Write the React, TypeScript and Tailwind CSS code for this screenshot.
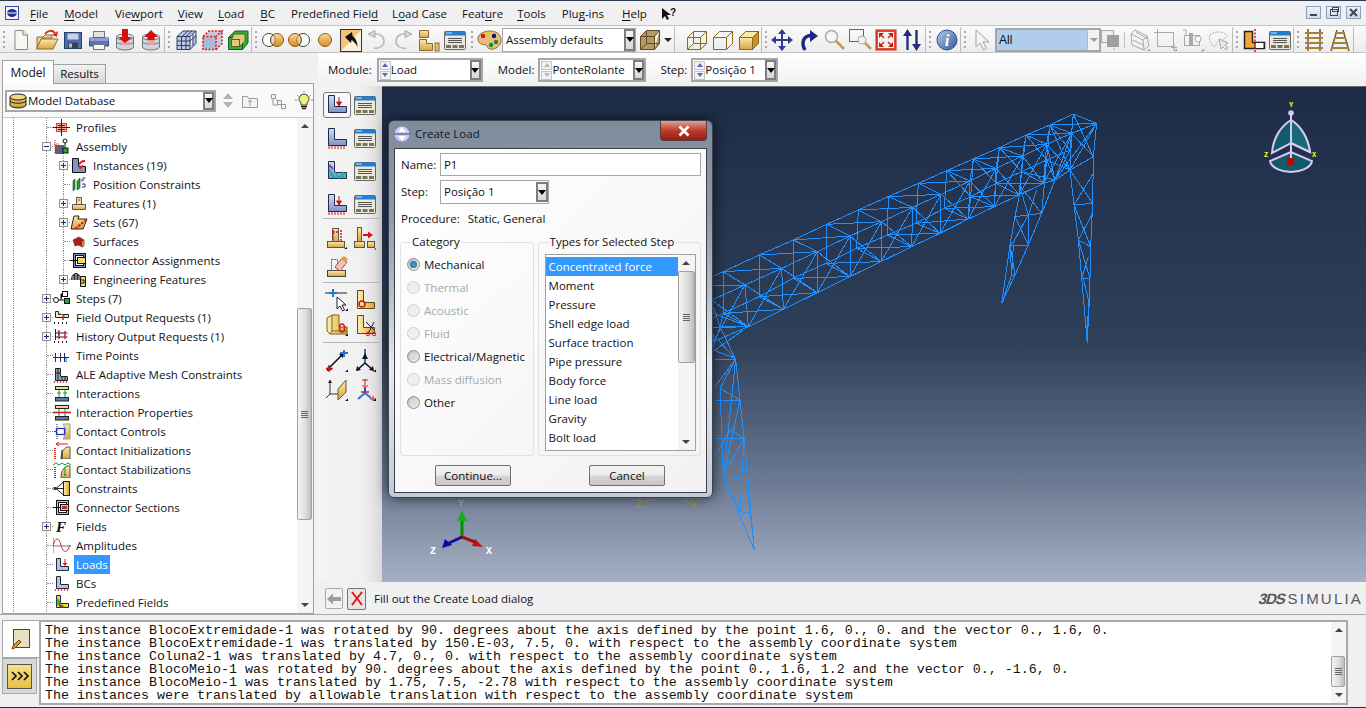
import type { FC, ReactNode } from 'react';

const Ic: FC<{ w?: number; h?: number; children: ReactNode }> = ({ w = 24, h = 24, children }) => (
  <svg width={w} height={h} viewBox={`0 0 ${w} ${h}`} className="shrink-0">
    {children}
  </svg>
);

const Defs = () => (
  <svg width="0" height="0" className="absolute">
    <defs>
      <linearGradient id="gold" x1="0" y1="0" x2="0" y2="1">
        <stop offset="0" stopColor="#fbe9a8" />
        <stop offset="1" stopColor="#d9a544" />
      </linearGradient>
      <linearGradient id="goldH" x1="0" y1="0" x2="1" y2="0">
        <stop offset="0" stopColor="#fff0b0" />
        <stop offset="1" stopColor="#e0a030" />
      </linearGradient>
      <linearGradient id="steel" x1="0" y1="0" x2="0" y2="1">
        <stop offset="0" stopColor="#d5dcf0" />
        <stop offset="1" stopColor="#7f93c4" />
      </linearGradient>
      <linearGradient id="ball" x1="0" y1="0" x2="1" y2="1">
        <stop offset="0" stopColor="#b9cbe6" />
        <stop offset="1" stopColor="#2c5a9c" />
      </linearGradient>
      <linearGradient id="orb" x1="0" y1="0" x2="0" y2="1">
        <stop offset="0" stopColor="#fbd79a" />
        <stop offset="1" stopColor="#d98a20" />
      </linearGradient>
    </defs>
  </svg>
);

/* toolbar drawings */
const NewDoc = () => (
  <Ic>
    <path d="M6 2.5h8l4.5 4.5v14.5H6z" fill="#f7f7f0" stroke="#8a8a8a" />
    <path d="M14 2.5V7h4.5" fill="#e5e5dc" stroke="#8a8a8a" />
  </Ic>
);
const OpenDoc = () => (
  <Ic>
    <path d="M2 9h6l2-2h7v3H7L2 20z" fill="#f2d68a" stroke="#8a6d2a" />
    <path d="M6 11h17l-5 10H1.5z" fill="url(#gold)" stroke="#8a6d2a" />
    <path d="M10 6c3-4 7-4 10-1" fill="none" stroke="#d4301c" strokeWidth="2" />
    <path d="M23 3l-1 6-5-2z" fill="#d4301c" />
  </Ic>
);
const Save = () => (
  <Ic>
    <rect x="3.5" y="4.5" width="17" height="16" fill="#4a6fae" stroke="#25406f" />
    <rect x="6.5" y="5.5" width="11" height="6" fill="#c8d2e4" />
    <rect x="7" y="14.5" width="10" height="6" fill="#3a3f4c" />
    <rect x="8" y="15.5" width="3" height="4" fill="#b8c0d0" />
  </Ic>
);
const Printer = () => (
  <Ic>
    <rect x="6.5" y="3.5" width="11" height="6" fill="#e4e4e8" stroke="#777" />
    <path d="M2.5 10h19v8h-19z" fill="#5f73b4" stroke="#3c4a80" />
    <rect x="2.5" y="10" width="19" height="3" fill="#8fa2d6" />
    <rect x="6.5" y="16.5" width="11" height="5" fill="#f5f5f5" stroke="#777" />
    <rect x="16" y="11" width="3" height="1" fill="#5ad05a" />
  </Ic>
);
const DbArrow: FC<{ up?: boolean }> = ({ up }) => (
  <Ic>
    <ellipse cx="12" cy="19" rx="8.5" ry="3" fill="#ccd4de" stroke="#6a7480" />
    <rect x="3.5" y="9" width="17" height="10" fill="#cfd6e0" />
    <path d="M3.5 9v10M20.5 9v10M3.5 14c2 3 15 3 17 0" fill="none" stroke="#6a7480" />
    <ellipse cx="12" cy="9" rx="8.5" ry="3" fill="#e4e8ee" stroke="#6a7480" />
    <rect x="8" y="9" width="8" height="8" fill="#e8a0a0" opacity="0.8" />
    {up ? (
      <path d="M8.5 3v8h7V8H19l-7-7-7 7h3.5z" fill="#d40f0f" transform="translate(0 1)" />
    ) : (
      <path d="M9 1h6v8h4l-7 6-7-6h4z" fill="#d40f0f" />
    )}
  </Ic>
);
const CubeGrid = () => (
  <Ic>
    <path d="M3 8.5h13v13H3zM3 8.5L9 3h13L16 8.5M16 21.5l6-6V3" fill="#bcc9e2" stroke="#2d3d66" />
    <path d="M7.5 8.5v13M12 8.5v13M3 13h13M3 17.5h13M8 3.5h0M14 3l-6 5.5M18 3l-6 5.5M19 5.8v12M16 13l6-5.5" fill="none" stroke="#2d3d66" />
  </Ic>
);
const CubeRed = () => (
  <Ic>
    <path d="M3 8.5h13v13H3z" fill="#a9bbdc" />
    <path d="M3 8.5L9 3h13v12.5l-6 6V8.5z" fill="#c0cde4" />
    <path d="M3 8.5h13v13H3zM3 8.5L9 3h13L16 8.5M16 21.5l6-6V3" fill="none" stroke="#e01010" strokeWidth="1.5" strokeDasharray="2 1.5" />
  </Ic>
);
const CubeGreen = () => (
  <Ic>
    <path d="M2.5 9.5h14v12h-14zM2.5 9.5L9 3h13v12l-5.5 6.5V9.5z" fill="#2fb12f" stroke="#1d5a1d" />
    <path d="M5.5 11.5h8v7h-8zM8 6h11v7l-5.5 5.5v-7h-8z" fill="#d9cc80" stroke="#60601a" />
  </Ic>
);
const Venn: FC<{ a?: boolean }> = ({ a }) => (
  <Ic w={26}>
    <circle cx={a ? 9 : 17} cy="12" r="6.5" fill="#fff" stroke="#444" />
    <circle cx={a ? 17 : 9} cy="12" r="6.5" fill="url(#orb)" stroke="#8a5a10" />
    <path d="M13 7a6.5 6.5 0 0 1 0 10 6.5 6.5 0 0 1 0-10z" fill={a ? '#fff' : '#f6e7c5'} stroke="#444" opacity="0.5" />
  </Ic>
);
const Solid = () => (
  <Ic w={26}>
    <circle cx="13" cy="12" r="6.5" fill="url(#orb)" stroke="#8a5a10" />
  </Ic>
);
const PickFace = () => (
  <Ic>
    <rect x="1.5" y="1.5" width="21" height="22" fill="#f4c27a" stroke="#444" />
    <path d="M22 2L2 23h20z" fill="#f9efdc" />
    <path d="M1.5 1.5h21v22h-21z" fill="none" stroke="#333" />
    <path d="M6 9l7-5 .5 4c3 2 5 6 5 11-2-4-4-6-6-7l-.5 3z" fill="#111" />
  </Ic>
);
const Undo: FC<{ flip?: boolean }> = ({ flip }) => (
  <Ic>
    <g transform={flip ? 'translate(24 0) scale(-1 1)' : undefined}>
      <path d="M8 6c6-1 11 2 11 7s-5 8-10 7" fill="none" stroke="#b8b8b8" strokeWidth="1.5" />
      <path d="M3 6l7-3.5v7z" fill="#d4d4d4" stroke="#aaa" />
    </g>
  </Ic>
);
const Pieces = () => (
  <Ic>
    <path d="M2.5 2.5h9v7h-9z" fill="url(#gold)" stroke="#8a6d2a" />
    <path d="M2.5 11.5h7v4h6v7h-13z" fill="url(#gold)" stroke="#8a6d2a" />
    <rect x="18" y="15" width="4" height="8" fill="#e6bf70" stroke="#8a6d2a" />
  </Ic>
);
const Manager = () => (
  <Ic>
    <rect x="1.5" y="3.5" width="21" height="18" rx="1" fill="#ece8da" stroke="#666" />
    <rect x="2" y="3.5" width="20" height="4" fill="#1f7fd0" />
    <rect x="3" y="4.5" width="6" height="1" fill="#cfe6fa" />
    <path d="M5 10.5h14M5 12.5h14M5 14.5h14" stroke="#555" />
    <rect x="3" y="17" width="5" height="3" fill="#7b7556" />
    <rect x="9.5" y="17" width="5" height="3" fill="#7b7556" />
    <rect x="16" y="17" width="5" height="3" fill="#7b7556" />
  </Ic>
);
const Palette = () => (
  <Ic w={26}>
    <path d="M2 12C1 6 8 3 14 3s11 3 11 9-6 10-11 9c-3-.5-2-3-4-4s-7 0-8-5z" fill="#e8bd82" stroke="#8a6d3a" />
    <circle cx="7" cy="8" r="2.2" fill="#d41818" />
    <circle cx="12.5" cy="6" r="2.2" fill="#e8d018" />
    <circle cx="18" cy="8" r="2.2" fill="#10107a" />
    <circle cx="20" cy="14" r="2.2" fill="#1a8a2a" />
    <circle cx="15" cy="17" r="2.2" fill="#1a8a2a" />
  </Ic>
);
const CubeWire = () => (
  <Ic>
    <path d="M3.5 9.5h13v12h-13zM9.5 3.5h13v12h-13zM3.5 9.5l6-6M16.5 9.5l6-6M3.5 21.5l6-6M16.5 21.5l6-6" fill="none" stroke="#8f6a14" />
  </Ic>
);
const CubeHidden = () => (
  <Ic>
    <path d="M3.5 9.5h13v12h-13zM3.5 9.5l6-6h13l-6 6M16.5 21.5l6-6v-12" fill="none" stroke="#8f6a14" />
  </Ic>
);
const CubeShade = () => (
  <Ic>
    <path d="M3.5 9.5l6-6h13l-6 6z" fill="#fbe9a8" stroke="#8f6a14" />
    <path d="M3.5 9.5h13v12h-13z" fill="url(#gold)" stroke="#8f6a14" />
    <path d="M16.5 9.5l6-6v12l-6 6z" fill="#c6932e" stroke="#8f6a14" />
  </Ic>
);
const CubeBrown = () => (
  <Ic>
    <path d="M3.5 8.5h14v13h-14zM3.5 8.5l6-6h13l-5 6M17.5 21.5l5-6v-13" fill="#b39a6a" stroke="#5f4a1e" />
    <path d="M9.5 3v12.5h13M9.5 15.5l-6 6" fill="none" stroke="#5f4a1e" />
  </Ic>
);
const Move = () => (
  <Ic>
    <path d="M12 3v18M3 12h18" stroke="#2d3c8c" strokeWidth="2" />
    <path d="M12 1l4 5H8zM12 23l4-5H8zM1 12l5-4v8zM23 12l-5-4v8z" fill="#2d3c8c" />
  </Ic>
);
const Rotate = () => (
  <Ic>
    <path d="M9 22C5 15 7 8 15 7.5" fill="none" stroke="#1c2780" strokeWidth="3.5" />
    <path d="M14 2l8 6-8 6z" fill="#1c2780" />
  </Ic>
);
const Magnify = () => (
  <Ic>
    <circle cx="9.5" cy="8.5" r="6" fill="#f6f6fa" stroke="#a8a8a8" strokeWidth="1.5" />
    <path d="M14 13l8 8" stroke="#c49b52" strokeWidth="2.5" />
  </Ic>
);
const BoxZoom = () => (
  <Ic>
    <rect x="1.5" y="1.5" width="14" height="12" fill="none" stroke="#d43a2a" />
    <circle cx="14" cy="12" r="4" fill="#f2f2f6" stroke="#aaa" />
    <path d="M17 15l6 6" stroke="#c49b52" strokeWidth="2.5" />
  </Ic>
);
const Fit = () => (
  <Ic>
    <rect x="2" y="2" width="20" height="20" fill="#e64a36" stroke="#c02818" />
    <rect x="4" y="4" width="16" height="16" fill="#f4f0ea" />
    <path d="M5 5l5 0-5 5zM19 5l-5 0 5 5zM5 19l5 0-5-5zM19 19l-5 0 5-5z" fill="#c81e10" />
    <path d="M6 6l4 4M18 6l-4 4M6 18l4-4M18 18l-4-4" stroke="#c81e10" strokeWidth="1.4" />
  </Ic>
);
const UpDown = () => (
  <Ic>
    <path d="M7.5 7v15M16.5 2v15" stroke="#24307e" strokeWidth="2.4" />
    <path d="M7.5 1l4.5 7H3zM16.5 23l4.5-7h-9z" fill="#24307e" />
  </Ic>
);
const Info = () => (
  <svg width="22" height="22" viewBox="0 0 22 22" className="shrink-0">
    <circle cx="11" cy="11" r="10" fill="url(#ball)" stroke="#2c5090" />
    <text x="11" y="17" textAnchor="middle" fontSize="17" fontWeight="700" fontStyle="italic" fill="#fff" fontFamily="Liberation Serif, serif">i</text>
  </svg>
);
const Cursor = () => (
  <Ic>
    <path d="M6 2v17l4-4 3.5 7 3-1.5-3.5-6.5h6z" fill="#f4f4f4" stroke="#a0a0a0" />
  </Ic>
);
const GrayOverlap = () => (
  <Ic>
    <rect x="2.5" y="2.5" width="12" height="12" fill="#eee" stroke="#aaa" />
    <rect x="8" y="7" width="12" height="12" fill="#a0a0a0" />
    <path d="M14 21h2" stroke="#aaa" />
  </Ic>
);
const GrayCube = () => (
  <Ic>
    <path d="M7 2l12 6 2 10-5 4-12-5-1-11z" fill="none" stroke="#a8a8a8" />
    <path d="M3 6l12 6 5-4M15 12l1 10M8 4l12 7M5 12l10 5" fill="none" stroke="#a8a8a8" />
    <path d="M22 21l-3 2h3z" fill="#888" />
  </Ic>
);
const GrayRect = () => (
  <Ic>
    <rect x="3.5" y="4.5" width="16" height="14" fill="none" stroke="#a8a8a8" />
    <path d="M3.5 1v6M0 4.5h7M20 16v7M17 19.5h6" stroke="#a8a8a8" />
    <path d="M23 21l-3 2h3z" fill="#888" />
  </Ic>
);
const GrayPick = () => (
  <Ic>
    <rect x="3.5" y="7.5" width="15" height="10" fill="none" stroke="#a8a8a8" />
    <rect x="8" y="5" width="4" height="13" fill="#a8a8a8" />
    <circle cx="17" cy="11" r="3" fill="#fff" stroke="#a8a8a8" />
    <path d="M2 2h3v6M23 21l-3 2h3z" stroke="#a8a8a8" fill="none" />
  </Ic>
);
const GrayLasso = () => (
  <Ic>
    <path d="M3 7c4-4 13-4 17 0-1 3-4 6-8 6-3 0-2 5-5 6-3-3-6-8-4-12z" fill="none" stroke="#b4b4b4" strokeDasharray="2 1" />
    <path d="M12 11l9 4-3 2 3 3-2 2-3-3-2 2z" fill="#e8e8e8" stroke="#a8a8a8" />
  </Ic>
);
const LSplit = () => (
  <Ic>
    <path d="M2.5 3.5h8v11h12v6h-20z" fill="#eda934" stroke="#222" strokeWidth="1.5" />
    <path d="M13 14.5h9v6h-9z" fill="#fff" stroke="#222" />
    <path d="M13 1v23" stroke="#d41818" strokeWidth="1.5" strokeDasharray="2 1.5" />
  </Ic>
);
const Rails: FC<{ slant?: boolean }> = ({ slant }) => (
  <Ic>
    {slant ? (
      <path d="M9 2L3 23M15 2l6 21" stroke="#6f5a30" strokeWidth="1.5" />
    ) : (
      <path d="M6 1v22M18 1v22" stroke="#6f5a30" strokeWidth="1.5" />
    )}
    <path d={slant ? 'M7 5h10M6 10h12M4 15h16M3 20h18' : 'M3 5h18M3 10h18M3 15h18M3 20h18'} stroke="#a4823c" strokeWidth="2" />
  </Ic>
);
const Help = () => (
  <svg width="16" height="14" viewBox="0 0 16 14" className="shrink-0">
    <path d="M1 1v11l3-3 2 4 2-1-2-4h4z" fill="#111" />
    <text x="9" y="9" fontSize="10" fontWeight="700" fill="#111" fontFamily="Liberation Sans, sans-serif">?</text>
  </svg>
);

/* module toolbox drawings */
const LBlue: FC<{ hatch?: boolean; load?: boolean; rainbow?: boolean }> = ({ hatch, load, rainbow }) => (
  <Ic>
    <path d="M3.5 2.5h6v11h12v6h-18z" fill="url(#steel)" stroke="#1f2a50" />
    {rainbow && <path d="M4 10l6 9M4 14l5 5M10 13l4 6 4-6M20 14l-3 5" stroke="#18b0a0" strokeWidth="1.6" fill="none" />}
    {rainbow && <path d="M4 6l4 4" stroke="#8830c8" strokeWidth="2" />}
    {hatch && <path d="M4 20v3M7 20v3M10 20v3M13 20v3M16 20v3M19 20v3" stroke="#c81818" />}
    {load && <path d="M14 4v8M14 13l-2.5-4h5z" stroke="#c81818" fill="#c81818" />}
  </Ic>
);
const LGold: FC<{ circle?: boolean; cut?: boolean }> = ({ circle, cut }) => (
  <Ic>
    <path d="M4.5 2.5h6v12h11v6h-17z" fill="url(#goldH)" stroke="#5a4a1a" />
    {circle && <circle cx="9" cy="16" r="3" fill="none" stroke="#c81818" strokeWidth="1.5" />}
    {cut && <path d="M13 9l8 8M21 9l-6 12" stroke="#222" />}
    {cut && <circle cx="15" cy="21" r="1.8" fill="none" stroke="#c81818" />}
    {cut && <circle cx="21" cy="21" r="1.8" fill="none" stroke="#c81818" />}
  </Ic>
);
const TBase: FC<{ cut?: boolean }> = ({ cut }) => (
  <Ic>
    <rect x="7.5" y="2.5" width="6" height="13" fill="url(#gold)" stroke="#555" />
    <rect x="2.5" y="15.5" width="17" height="6" fill="url(#gold)" stroke="#555" />
    {cut && <path d="M8 6h5M16 4v11" stroke="#d41818" strokeWidth="1.5" strokeDasharray="2 1" />}
    {cut && <path d="M8 4v10" stroke="#d41818" strokeWidth="1.5" strokeDasharray="2 1" />}
    <path d="M22 21l-3 2h3z" fill="#111" />
  </Ic>
);
const TSplit = () => (
  <Ic>
    <rect x="4.5" y="1.5" width="4" height="14" fill="url(#gold)" stroke="#555" />
    <rect x="1.5" y="15.5" width="10" height="6" fill="url(#gold)" stroke="#555" />
    <rect x="14.5" y="15.5" width="7" height="6" fill="url(#gold)" stroke="#555" />
    <path d="M10 9h6" stroke="#d41818" strokeWidth="2" />
    <path d="M15 5.5l5 3.5-5 3.5z" fill="#d41818" />
    <path d="M23 22l-2 1.5h2z" fill="#111" />
  </Ic>
);
const Erase = () => (
  <Ic>
    <rect x="2.5" y="16.5" width="18" height="6" fill="url(#gold)" stroke="#444" />
    <rect x="6.5" y="5.5" width="6" height="11" fill="none" stroke="#555" strokeDasharray="2 1" />
    <path d="M10 13l7-9 5 4-7 9z" fill="#e9c8b2" stroke="#c04848" />
    <path d="M16 5l3-3 4 3-3 3z" fill="#e0a030" />
  </Ic>
);
const Sketch: FC<{ n: number }> = ({ n }) => (
  <Ic>
    {n === 0 && (
      <>
        <path d="M0 5h22" stroke="#222" />
        <path d="M8 1v8M4 5h8" stroke="#1e78d8" strokeWidth="2" />
        <path d="M12 9v12l3-3 2.5 5 2-1-2.5-5h4z" fill="#fff" stroke="#222" />
      </>
    )}
    {n === 1 && (
      <>
        <path d="M2 21L18 5" stroke="#111" strokeWidth="1.6" />
        <path d="M19 4l-5 1 4 4zM2 22l5-1-4-4z" fill="#111" />
        <path d="M4 16v7M1 19.5h7" stroke="#d41818" strokeWidth="1.4" />
        <path d="M19 1v7M15 4h8" stroke="#1e78d8" strokeWidth="2" />
      </>
    )}
    {n === 2 && (
      <>
        <path d="M12 0v15" stroke="#1e78d8" strokeWidth="2" />
        <path d="M12 4l-3 6h6z" fill="#111" />
        <path d="M12 14L4 21M12 14l8 7" stroke="#111" strokeWidth="1.6" />
        <path d="M3 22l1-5 4 4zM21 22l-1-5-4 4z" fill="#111" />
      </>
    )}
    {n === 3 && (
      <>
        <path d="M5 2v14M5 16h14M5 16L1 20" stroke="#333" />
        <path d="M5 2L3 5h4zM19 16l-3-2v4z" fill="#111" />
        <path d="M13 11l8-9v12l-8 8z" fill="url(#gold)" stroke="#6d5a20" />
      </>
    )}
    {n === 4 && (
      <>
        <path d="M12 1v6" stroke="#d41818" />
        <path d="M9 2h6M9 8h6" stroke="#d41818" />
        <path d="M12 9v6" stroke="#1e4ad8" strokeWidth="2" />
        <path d="M12 15l-7 6M12 15l6 5" stroke="#1e78d8" strokeWidth="2" />
        <path d="M8 14h8" stroke="#d41818" strokeWidth="1.5" />
        <path d="M20 18v5M17 21h6" stroke="#d41818" />
      </>
    )}
    <path d="M23 23l-3 0 3-2.5z" fill="#111" />
  </Ic>
);
const PartHole = () => (
  <Ic>
    <path d="M7 2h7v12h8v7H5l-3-3V5z" fill="url(#goldH)" stroke="#7a6420" />
    <path d="M7 2v16l-2 3M7 18h15" fill="none" stroke="#7a6420" />
    <ellipse cx="17" cy="15" rx="2.5" ry="4" fill="none" stroke="#d41818" strokeWidth="1.5" />
    <path d="M23 23l-3 0 3-2.5z" fill="#111" />
  </Ic>
);

/* model tree drawings */
const T: FC<{ children: ReactNode }> = ({ children }) => (
  <svg width="18" height="17" viewBox="0 0 18 17" className="shrink-0">
    {children}
  </svg>
);
const line = '#1f2940';
const treeIcons: Record<string, ReactNode> = {
  profiles: (
    <T>
      <rect x="3.5" y="4.5" width="10" height="8" fill="#f6b4a4" stroke="#d43" />
      <path d="M8.5 0v17M0 8.5h17M5 6.5h7M5 10.5h7" stroke="#222" />
    </T>
  ),
  assembly: (
    <T>
      <rect x="2" y="7" width="9" height="9" fill="#5a6278" />
      <path d="M2 2v14M1 6h5" stroke="#d02020" strokeDasharray="1 1" />
      <circle cx="12" cy="3" r="2" fill="#fff" stroke="#111" />
      <path d="M12 5v5" stroke="#111" />
      <rect x="10" y="10" width="5" height="5" fill="#2fa52f" stroke="#111" />
    </T>
  ),
  instances: (
    <T>
      <path d="M2.5 1.5h6v8h7v6h-13z" fill="#7d98c6" stroke="#111" />
      <path d="M9 8c1-3 4-4 6-4M10 12c0-2 2-3 3-3" fill="none" stroke="#e01818" strokeWidth="2" />
    </T>
  ),
  position: (
    <T>
      <path d="M3 5l2-2v10l-2 2z" fill="#25a53a" stroke="#111" strokeWidth="0.5" />
      <path d="M7 5l3-3v10l-3 2z" fill="#25a53a" stroke="#111" strokeWidth="0.5" />
      <path d="M10 5l3-4h3l-3 5z" fill="#9a9a9a" />
      <path d="M12 8h3v3h-3" fill="none" stroke="#2030a0" />
    </T>
  ),
  features: (
    <T>
      <path d="M6.5 2.5h5v7h-5z" fill="#f5dfa0" stroke="#555" />
      <path d="M2.5 9.5h13v5h-13z" fill="url(#gold)" stroke="#555" />
      <path d="M8 5h2" stroke="#d02020" />
    </T>
  ),
  sets: (
    <T>
      <path d="M4 2h5l-1 3h9l-4 10H1z" fill="url(#gold)" stroke="#222" />
      <path d="M5 15L16 6" stroke="#d82818" strokeWidth="2.2" strokeDasharray="3 1" />
    </T>
  ),
  surfaces: (
    <T>
      <path d="M3 7l6-3 5 3-1 7-5-2-3 1z" fill="#b81818" stroke="#7a5a30" />
      <path d="M12 8l3 1-1 5-2-1z" fill="#b59055" />
    </T>
  ),
  connector: (
    <T>
      <rect x="3.5" y="1.5" width="12" height="14" fill="#7f94bc" stroke="#111" />
      <rect x="5.5" y="3.5" width="8" height="10" fill="#fff" stroke="#111" />
      <rect x="7.5" y="5.5" width="8" height="6" fill="#f5d868" stroke="#111" />
      <path d="M0 8.5h7" stroke="#111" />
    </T>
  ),
  engineering: (
    <T>
      <path d="M1 9c0-5 3-7 5-7s5 2 5 7z" fill="#333" />
      <path d="M3 9V5M6 9V3M9 9V5" stroke="#ccc" />
      <path d="M10.5 5.5h5v10h-5z" fill="#f5d868" stroke="#111" />
      <path d="M11 9h3v3h-3" fill="none" stroke="#111" />
    </T>
  ),
  steps: (
    <T>
      <circle cx="3" cy="10" r="2.5" fill="#fff" stroke="#111" />
      <path d="M6 10h5M8 10V4h2" stroke="#111" />
      <rect x="9.5" y="1.5" width="5" height="5" fill="#fff" stroke="#111" />
      <rect x="11.5" y="8.5" width="5" height="5" fill="#22a03a" stroke="#111" />
    </T>
  ),
  field: (
    <T>
      <path d="M2.5 2.5h3v3h10v3h-13z" fill="#f2e6c0" stroke="#222" />
      <path d="M5 4l7 3" stroke="#20a040" />
      <path d="M10 7v4" stroke="#d02020" strokeWidth="1.5" />
      <path d="M1 14h2M5 14h2M9 14h2M13 14h2" stroke="#222" strokeWidth="2" strokeDasharray="1 1" />
    </T>
  ),
  history: (
    <T>
      <path d="M2.5 1v11M2.5 5h12M2.5 9h12" stroke="#222" />
      <path d="M5 3h1v8M12 3v8" stroke="#d02020" strokeWidth="1.5" />
      <path d="M1 14h2M5 14h2M9 14h2M13 14h2" stroke="#222" strokeWidth="2" strokeDasharray="1 1" />
    </T>
  ),
  time: (
    <T>
      <path d="M0 10.5h16M2.5 6v9M7.5 6v9M11.5 6v9" stroke="#1e2c78" />
      <text x="12" y="15" fontSize="8" fill="#111" fontFamily="Liberation Serif, serif">t</text>
    </T>
  ),
  ale: (
    <T>
      <path d="M2.5 2.5h5v8h7v4h-12z" fill="#8fa3c8" stroke="#222" />
      <path d="M2.5 7h5M5 3v11M9 11v3M12 11v3" stroke="#222" />
      <path d="M2 15l-1 2M5 15l-1 2M8 15l-1 2M11 15l-1 2M14 15l-1 2" stroke="#d02020" />
    </T>
  ),
  interactions: (
    <T>
      <rect x="2.5" y="1.5" width="13" height="3" fill="#f5e080" stroke="#222" />
      <rect x="2.5" y="12.5" width="13" height="3.5" fill="#6079b0" stroke="#222" />
      <path d="M6 5v7M12 5v7M4 8h4M10 8h4" stroke="#0d9a3a" />
    </T>
  ),
  properties: (
    <T>
      <rect x="2.5" y="1.5" width="13" height="3" fill="#f5e080" stroke="#222" />
      <rect x="2.5" y="12.5" width="13" height="3.5" fill="#6079b0" stroke="#222" />
      <path d="M6 5v7M12 5v7" stroke="#0d9a3a" />
      <path d="M0 8.5h18" stroke="#d02020" strokeWidth="1.6" />
    </T>
  ),
  controls: (
    <T>
      <path d="M4 1v15" stroke="#222" strokeDasharray="1 1" />
      <path d="M10 1h7v15h-7c3-4 3-11 0-15z" fill="url(#gold)" stroke="#999" />
      <rect x="3.5" y="5.5" width="8" height="6" fill="none" stroke="#1e30c8" strokeWidth="1.3" />
      <path d="M1 8.5h3" stroke="#1e30c8" />
    </T>
  ),
  init: (
    <T>
      <path d="M2 6v11" stroke="#d02020" strokeDasharray="1 1" strokeWidth="2" />
      <path d="M8 17c0-6 2-10 6-12h3v12z" fill="url(#gold)" stroke="#555" />
      <path d="M3 2h12M3 2l3-2M3 2l3 2" stroke="#d02020" />
      <path d="M9 8v9" stroke="#111" />
    </T>
  ),
  stab: (
    <T>
      <path d="M2 6v11" stroke="#d02020" strokeDasharray="1 1" strokeWidth="2" />
      <path d="M8 17c0-6 2-10 6-12h3v12z" fill="url(#gold)" stroke="#555" />
      <path d="M0 4l3-2 3 2 3-2 3 2 3-2 3 2" fill="none" stroke="#0d9a3a" />
      <path d="M12 6v8" stroke="#0d9a3a" />
      <circle cx="12" cy="14" r="1" fill="#0d9a3a" />
    </T>
  ),
  constraints: (
    <T>
      <rect x="0.5" y="7" width="3" height="3" fill="#333" />
      <path d="M3 8.5l7-6M3 8.5l7 6M3 8.5h7" stroke="#222" />
      <rect x="10.5" y="1.5" width="6" height="14" fill="url(#goldH)" stroke="#222" />
    </T>
  ),
  sections: (
    <T>
      <rect x="3.5" y="1.5" width="12" height="14" fill="#c8c8c8" stroke="#111" />
      <rect x="5.5" y="3.5" width="8" height="10" fill="#fff" stroke="#111" />
      <rect x="7.5" y="5.5" width="8" height="6" fill="#e4d070" stroke="#111" />
      <rect x="9" y="7" width="5" height="3" fill="#c82828" />
      <path d="M0 8.5h7" stroke="#111" />
    </T>
  ),
  fields: (
    <T>
      <text x="3" y="14" fontSize="15" fontWeight="700" fontStyle="italic" fill="#111" fontFamily="Liberation Serif, serif">F</text>
    </T>
  ),
  amplitudes: (
    <T>
      <path d="M0 9h18M0 1v15" stroke="#777" />
      <path d="M0 9c2-9 6-9 8-1s6 9 9 0" fill="none" stroke="#c02020" />
    </T>
  ),
  loads: (
    <T>
      <path d="M3.5 2.5h4v8h8v4h-12z" fill="#b4c4e0" stroke={line} />
      <path d="M12 3v6" stroke="#d81818" />
      <path d="M9.5 7h5L12 10z" fill="#d81818" />
    </T>
  ),
  bcs: (
    <T>
      <path d="M3.5 1.5h4v8h8v4h-12z" fill="#b4c4e0" stroke={line} />
      <path d="M3 14l-1 2M6 14l-1 2M9 14l-1 2M12 14l-1 2M15 14l-1 2" stroke="#d81818" />
    </T>
  ),
  predefined: (
    <T>
      <path d="M3.5 1.5h4v8h8v4h-12z" fill="#f2d820" stroke={line} />
      <path d="M4 9l7 4M4 5l3 4" stroke="#28a838" strokeWidth="2" />
      <path d="M6 11l3 2" stroke="#d81818" strokeWidth="2" />
    </T>
  ),
};

type TreeItem = { label: string; icon: string; level: 1 | 2; exp?: '+' | '-'; on?: boolean };

const tree: TreeItem[] = [
  { label: 'Profiles', icon: 'profiles', level: 1 },
  { label: 'Assembly', icon: 'assembly', level: 1, exp: '-' },
  { label: 'Instances (19)', icon: 'instances', level: 2, exp: '+' },
  { label: 'Position Constraints', icon: 'position', level: 2 },
  { label: 'Features (1)', icon: 'features', level: 2, exp: '+' },
  { label: 'Sets (67)', icon: 'sets', level: 2, exp: '+' },
  { label: 'Surfaces', icon: 'surfaces', level: 2 },
  { label: 'Connector Assignments', icon: 'connector', level: 2 },
  { label: 'Engineering Features', icon: 'engineering', level: 2, exp: '+' },
  { label: 'Steps (7)', icon: 'steps', level: 1, exp: '+' },
  { label: 'Field Output Requests (1)', icon: 'field', level: 1, exp: '+' },
  { label: 'History Output Requests (1)', icon: 'history', level: 1, exp: '+' },
  { label: 'Time Points', icon: 'time', level: 1 },
  { label: 'ALE Adaptive Mesh Constraints', icon: 'ale', level: 1 },
  { label: 'Interactions', icon: 'interactions', level: 1 },
  { label: 'Interaction Properties', icon: 'properties', level: 1 },
  { label: 'Contact Controls', icon: 'controls', level: 1 },
  { label: 'Contact Initializations', icon: 'init', level: 1 },
  { label: 'Contact Stabilizations', icon: 'stab', level: 1 },
  { label: 'Constraints', icon: 'constraints', level: 1 },
  { label: 'Connector Sections', icon: 'sections', level: 1 },
  { label: 'Fields', icon: 'fields', level: 1, exp: '+' },
  { label: 'Amplitudes', icon: 'amplitudes', level: 1 },
  { label: 'Loads', icon: 'loads', level: 1, on: true },
  { label: 'BCs', icon: 'bcs', level: 1 },
  { label: 'Predefined Fields', icon: 'predefined', level: 1 },
];

const Expander: FC<{ sign: '+' | '-' }> = ({ sign }) => (
  <span className="absolute left-[-5px] top-[5px] flex h-[9px] w-[9px] items-center justify-center border border-[#919191] bg-[#f4f4f4]">
    <span className="relative block h-[1px] w-[5px] bg-[#1d2a6b]">
      {sign === '+' && <span className="absolute left-[2px] top-[-2px] block h-[5px] w-[1px] bg-[#1d2a6b]" />}
    </span>
  </span>
);

const TreeRow: FC<{ item: TreeItem }> = ({ item }) => (
  <div className="flex h-[19px] shrink-0 items-center">
    <div className="w-[10px] shrink-0" />
    <div className="h-full w-[33px] shrink-0 border-l border-dotted border-[#8c8c8c]" />
    <div className={`relative h-full shrink-0 border-l border-dotted border-[#8c8c8c] ${item.level === 1 ? 'w-[7px]' : 'w-[17px]'}`}>
      {item.level === 1 && <div className="mt-[9px] w-full border-t border-dotted border-[#8c8c8c]" />}
      {item.level === 1 && item.exp && <Expander sign={item.exp} />}
    </div>
    {item.level === 2 && (
      <div className="relative h-full w-[7px] shrink-0 border-l border-dotted border-[#8c8c8c]">
        <div className="mt-[9px] w-full border-t border-dotted border-[#8c8c8c]" />
        {item.exp && <Expander sign={item.exp} />}
      </div>
    )}
    {treeIcons[item.icon]}
    <span className={`ml-[3px] flex h-full items-center whitespace-nowrap px-[2px] ${item.on ? 'bg-[#3399ff] text-white' : 'text-[#101018]'}`}>
      {item.label}
    </span>
  </div>
);

const Cell: FC<{ w?: string; children?: ReactNode }> = ({ w = 'w-[26px]', children }) => (
  <div className={`flex h-full shrink-0 items-center justify-center ${w}`}>{children}</div>
);
const Grip: FC<{ w?: string }> = ({ w = 'w-[8px]' }) => (
  <div className={`flex h-full shrink-0 flex-col items-center justify-center gap-[3px] ${w}`}>
    <span className="block h-[2px] w-[2px] bg-[#a8a8a8]" />
    <span className="block h-[2px] w-[2px] bg-[#a8a8a8]" />
    <span className="block h-[2px] w-[2px] bg-[#a8a8a8]" />
    <span className="block h-[2px] w-[2px] bg-[#a8a8a8]" />
  </div>
);
const Sep = () => <div className="h-full w-[1px] shrink-0 bg-[#bdbdbd]" />;

const ArrowBtn: FC<{ className?: string }> = ({ className = '' }) => (
  <div className={`flex shrink-0 items-center justify-center border-2 border-[#7d7d7d] bg-[linear-gradient(#f6f6f6,#d6d6d6)] ${className}`}>
    <span className="block h-0 w-0 border-x-[4px] border-t-[5px] border-x-transparent border-t-black" />
  </div>
);

const Spin: FC<{ off?: boolean }> = ({ off }) => {
  const top = off ? 'border-b-[#b8b8b8]' : 'border-b-[#5a68b8]';
  const bot = off ? 'border-t-[#b8b8b8]' : 'border-t-[#5a68b8]';
  return (
    <div className="ml-[1px] flex h-full w-[11px] shrink-0 flex-col justify-center gap-[1px]">
      <div className="flex h-[9px] items-center justify-center border border-[#c4c4c4] bg-[#f2f2f6]">
        <span className={`block h-0 w-0 border-x-[3px] border-b-[4px] border-x-transparent ${top}`} />
      </div>
      <div className="flex h-[9px] items-center justify-center border border-[#c4c4c4] bg-[#f2f2f6]">
        <span className={`block h-0 w-0 border-x-[3px] border-t-[4px] border-x-transparent ${bot}`} />
      </div>
    </div>
  );
};

const ModuleCombo: FC<{ value: string; w: string; off?: boolean }> = ({ value, w, off }) => (
  <div className={`flex h-[24px] items-center border-2 border-[#a6a6a6] bg-white ${w}`}>
    <Spin off={off} />
    <span className="flex-1 whitespace-nowrap text-[#101018]">{value}</span>
    <ArrowBtn className="h-[20px] w-[11px]" />
  </div>
);

const Menu: FC<{ pre?: string; u: string; post?: string; className: string }> = ({ pre, u, post, className }) => (
  <span className={`whitespace-nowrap ${className}`}>
    {pre}
    <span className="underline underline-offset-2">{u}</span>
    {post}
  </span>
);

const Radio: FC<{ label: string; on?: boolean; off?: boolean }> = ({ label, on, off }) => (
  <div className="flex h-[23px] items-center">
    <span
      className={`flex h-[13px] w-[13px] items-center justify-center rounded-full border ${
        off ? 'border-[#cfcfcf] bg-[#eeeeee]' : 'border-[#8d8d8d] bg-[linear-gradient(135deg,#b9b9b9,#f5f5f5)]'
      }`}
    >
      {on && <span className="block h-[7px] w-[7px] rounded-full bg-[radial-gradient(circle,#4ea6d8,#145a8c)]" />}
      {!on && !off && <span className="block h-[7px] w-[7px] rounded-full bg-[#dcdcdc]" />}
    </span>
    <span className={`ml-[4px] whitespace-nowrap ${off ? 'text-[#a8a8a8]' : 'text-[#101018]'}`}>{label}</span>
  </div>
);

const ScrollArrow: FC<{ up?: boolean }> = ({ up }) => (
  <div className="flex h-[16px] items-center justify-center">
    <span className={`block h-0 w-0 border-x-[4px] border-x-transparent ${up ? 'border-b-[4px] border-b-[#444]' : 'border-t-[4px] border-t-[#444]'}`} />
  </div>
);

const Thumb: FC<{ className: string }> = ({ className }) => (
  <div className={`flex items-center justify-center rounded-[2px] border border-[#a0a0a0] bg-[linear-gradient(90deg,#f4f4f4,#dcdcdc_60%,#bcbcbc)] ${className}`}>
    <div className="flex flex-col gap-[1px]">
      <span className="block h-[1px] w-[7px] bg-[#666]" />
      <span className="block h-[1px] w-[7px] bg-[#666]" />
      <span className="block h-[1px] w-[7px] bg-[#666]" />
      <span className="block h-[1px] w-[7px] bg-[#666]" />
    </div>
  </div>
);

/* wireframe of the crane, points read off the picture */
const zp = (x: number, y: number): [number, number] => [700 + x / 3, 100 + y / 3];
const rearTop = [[-30, 560], [70, 515], [178, 465], [280, 420], [380, 373], [475, 330], [565, 290], [655, 250], [740, 212], [820, 177], [898, 143], [978, 105], [1050, 75], [1120, 42]];
const frontTop = [[35, 600], [135, 555], [245, 505], [352, 455], [450, 408], [545, 365], [638, 322], [723, 283], [810, 243], [888, 205], [968, 168], [1040, 133], [1115, 100], [1190, 70]];
const rearBot = [[-30, 685], [70, 640], [178, 590], [280, 535], [378, 490], [470, 445], [562, 405], [648, 370], [733, 325], [812, 290], [888, 250], [965, 215], [1040, 180], [1110, 150]];
const frontBot = [[40, 725], [145, 680], [250, 628], [352, 578], [450, 530], [543, 485], [635, 440], [720, 400], [805, 357], [883, 320], [958, 285], [1030, 250], [1065, 240], [1110, 210]];

const trussSegs: number[][] = [];
const seg = (a: number[], b: number[]) => trussSegs.push([...zp(a[0], a[1]), ...zp(b[0], b[1])]);
rearTop.forEach((_, i) => {
  const [A, B, C, D] = [rearTop[i], frontTop[i], rearBot[i], frontBot[i]];
  seg(A, B);
  seg(A, C);
  seg(B, D);
  seg(C, D);
  if (i < rearTop.length - 1) {
    const [A2, B2, C2, D2] = [rearTop[i + 1], frontTop[i + 1], rearBot[i + 1], frontBot[i + 1]];
    seg(A, A2);
    seg(B, B2);
    seg(C, C2);
    seg(D, D2);
    seg(A, B2);
    seg(C, D2);
    seg(D, B2);
    seg(B, D2);
    if (i > 7) {
      seg(B, A2);
      seg(A, C2);
      seg(D, C2);
    }
  }
});
const extra = [
  // top right block
  [1120, 42, 1190, 70], [1190, 70, 1180, 170], [1115, 100, 1180, 170], [1120, 42, 1180, 170], [1115, 100, 1110, 210], [1180, 170, 1110, 210], [1050, 75, 1110, 210], [1190, 70, 1110, 210], [1040, 133, 1110, 210], [1065, 240, 1115, 100],
  // right leg
  [1180, 170, 1178, 310], [1110, 210, 1122, 315], [1122, 315, 1178, 310], [1110, 210, 1178, 310], [1180, 220, 1122, 315], [1122, 315, 1135, 420], [1178, 310, 1172, 440], [1135, 420, 1172, 440], [1122, 315, 1172, 440], [1178, 340, 1135, 420], [1135, 420, 1145, 535], [1172, 440, 1170, 535], [1145, 535, 1170, 535], [1135, 420, 1170, 535], [1165, 470, 1145, 535], [1145, 535, 1162, 730], [1170, 535, 1162, 730], [1145, 515, 1168, 610], [1168, 610, 1160, 690],
  // middle leg
  [958, 285, 945, 350], [1025, 340, 1065, 240], [965, 215, 958, 285], [1040, 180, 1025, 340], [958, 255, 1025, 340], [945, 350, 1025, 340], [985, 345, 958, 255], [985, 345, 1010, 270], [945, 350, 930, 435], [985, 345, 985, 435], [1025, 340, 985, 435], [930, 435, 985, 435], [945, 350, 985, 435], [985, 345, 935, 435], [930, 435, 935, 525], [985, 435, 945, 525], [935, 525, 945, 525], [930, 435, 945, 525], [940, 435, 935, 525], [935, 525, 905, 610], [945, 525, 905, 610], [930, 435, 905, 610],
  // left end
  [40, 620, 60, 680], [60, 680, 105, 775], [60, 680, 40, 740], [40, 640, 145, 680], [145, 680, 60, 680], [60, 680, 70, 640], [40, 750, 105, 775],
];
extra.forEach((e) => trussSegs.push([...zp(e[0], e[1]), ...zp(e[2], e[3])]));
// left leg below the truss, points are in the crop at 400,330
const lz = (x: number, y: number): [number, number] => [400 + x / 3, 330 + y / 3];
[
  [1007, 88, 1020, 210], [1020, 210, 1032, 325], [1032, 325, 1063, 660], [945, 90, 1007, 88], [945, 210, 1020, 210], [945, 325, 1032, 325], [960, 175, 1007, 88], [960, 175, 1020, 210], [960, 175, 970, 440], [1007, 88, 970, 440], [1020, 210, 970, 440], [990, 300, 1032, 325], [1032, 325, 970, 440], [970, 440, 1063, 660], [1040, 450, 970, 440], [1040, 450, 1063, 660], [1020, 545, 1050, 550], [1020, 545, 970, 440], [1050, 550, 1040, 450], [1032, 325, 1020, 545], [945, 20, 1007, 88], [945, 60, 1030, 0], [945, 170, 1007, 88], [945, 380, 990, 300],
].forEach((e) => trussSegs.push([...lz(e[0], e[1]), ...lz(e[2], e[3])]));

const Wire = () => (
  <svg className="absolute inset-0" width="984" height="495" viewBox="382 87 984 495">
    <g shapeRendering="crispEdges">
      {trussSegs.map((s, i) => (
        <line key={i} x1={s[0]} y1={s[1]} x2={s[2]} y2={s[3]} stroke="#1e90ff" strokeWidth="1" />
      ))}
    </g>
    {/* dim triad labels under the dialog */}
    <g stroke="#b0a61c" fill="none">
      <path d="M637 500h5l-5 7h5M644 502l6-2M684 500l6 4M692 500l5 7M697 500l-5 7" />
    </g>
    <text x="461" y="506" textAnchor="middle" fontSize="9" fontWeight="700" fill="#aab" fontFamily="Liberation Sans, sans-serif">Y</text>
    {/* view triad */}
    <path d="M462 537v-17" stroke="#0a8a0a" strokeWidth="3" />
    <path d="M462 511l5 10h-10z" fill="#12b012" />
    <path d="M462 537l-13 6" stroke="#1010a0" strokeWidth="3" />
    <path d="M442 548l3-9 7 6z" fill="#0808b0" />
    <path d="M462 537l13 5" stroke="#a81010" strokeWidth="3" />
    <path d="M483 547l-8-8-3 7z" fill="#c01010" />
    <text x="433" y="554" textAnchor="middle" fontSize="10" fontWeight="700" fill="#fff" fontFamily="Liberation Mono, monospace">Z</text>
    <text x="489" y="554" textAnchor="middle" fontSize="10" fontWeight="700" fill="#fff" fontFamily="Liberation Mono, monospace">X</text>
    {/* 3D compass */}
    <g stroke="#d8c8f8" strokeWidth="2">
      <path d="M1291 120c-10 6-18 18-19 33l19-10 19 9c-2-14-9-26-19-32z" fill="#135a6a" />
      <path d="M1291 120c10 6 17 18 19 32l-19-9z" fill="#1a6878" />
      <path d="M1291 152l-21 9c1 7 12 11 21 11s20-4 21-11z" fill="#135a6a" />
      <path d="M1291 113v45" fill="none" />
    </g>
    <circle cx="1291" cy="113" r="2.8" fill="#d8c8f8" />
    <rect x="1287" y="158" width="7" height="7" fill="#c80000" />
    <text x="1291" y="107" textAnchor="middle" fontSize="7" fontWeight="700" fill="#ffff20" fontFamily="Liberation Mono, monospace">Y</text>
    <text x="1266" y="157" textAnchor="middle" fontSize="7" fontWeight="700" fill="#ffff20" fontFamily="Liberation Mono, monospace">Z</text>
    <text x="1314" y="157" textAnchor="middle" fontSize="7" fontWeight="700" fill="#ffff20" fontFamily="Liberation Mono, monospace">X</text>
  </svg>
);

const Dialog = () => (
  <div className="absolute left-[6px] top-[33px] h-[378px] w-[325px] rounded-[6px] border border-[#3b4350] bg-[linear-gradient(#7f8b9c,#8f9aa9_25%,#b3bcc6_45%,#e6e9ed_65%,#c3ccd6)] p-[5px] pt-0 shadow-[0_0_14px_rgba(0,0,0,0.65)]">
    <div className="flex h-[27px] items-center">
      <svg width="16" height="16" viewBox="0 0 16 16" className="mb-[2px] shrink-0">
        <circle cx="8" cy="8" r="7.5" fill="#c9cdf0" />
        <path d="M0 8h16" stroke="#3a3a80" />
        <path d="M8 1l4 5H4zM8 15l4-5H4z" fill="#fff" />
      </svg>
      <span className="mb-[2px] ml-[5px] whitespace-nowrap text-[#101822]">Create Load</span>
      <div className="ml-auto mb-[7px] flex h-[20px] w-[47px] items-center justify-center rounded-b-[4px] border border-t-0 border-[#5a3a3a] bg-[linear-gradient(#d9a49a,#c0392b_50%,#8f1f12)]">
        <svg width="14" height="12" viewBox="0 0 14 12">
          <path d="M2.5 1.5l9 9M11.5 1.5l-9 9" stroke="#fff" strokeWidth="2.6" />
        </svg>
      </div>
    </div>
    <div className="h-[345px] border border-[#39404a] bg-[linear-gradient(135deg,#ffffff,#f2f2f2)] px-[5px] pt-[4px]">
      <div className="flex h-[23px] items-center">
        <span className="w-[40px] pl-[1px] text-[#101018]">Name:</span>
        <div className="flex h-full w-[262px] items-center border border-[#a6a6a6] bg-white pl-[3px] text-[#101018]">P1</div>
      </div>
      <div className="mt-[4px] flex h-[24px] items-center">
        <span className="w-[40px] pl-[1px] text-[#101018]">Step:</span>
        <div className="flex h-full w-[109px] items-center border border-[#a6a6a6] bg-white pl-[3px] text-[#101018]">
          <span className="flex-1">Posição 1</span>
          <ArrowBtn className="h-[20px] w-[12px]" />
        </div>
      </div>
      <div className="mt-[6px] flex h-[18px] items-center pl-[1px] text-[#101018]">
        <span>Procedure:</span>
        <span className="ml-[8px]">Static, General</span>
      </div>
      <div className="mt-[7px] flex gap-[4px]">
        <fieldset className="h-[221px] w-[134px] rounded-[3px] border border-[#dde2e8] pl-[6px]">
          <legend className="ml-[4px] px-[1px] leading-[14px] text-[#101018]">Category</legend>
          <div className="mt-[4px] flex flex-col">
            <Radio label="Mechanical" on />
            <Radio label="Thermal" off />
            <Radio label="Acoustic" off />
            <Radio label="Fluid" off />
            <Radio label="Electrical/Magnetic" />
            <Radio label="Mass diffusion" off />
            <Radio label="Other" />
          </div>
        </fieldset>
        <fieldset className="h-[221px] w-[164px] rounded-[3px] border border-[#dde2e8] pl-[6px]">
          <legend className="ml-[4px] px-[1px] leading-[14px] text-[#101018]">Types for Selected Step</legend>
          <div className="mt-[5px] flex h-[197px] w-[151px] border border-[#a0a0a0] bg-white">
            <div className="flex-1 pt-[2px]">
              {['Concentrated force', 'Moment', 'Pressure', 'Shell edge load', 'Surface traction', 'Pipe pressure', 'Body force', 'Line load', 'Gravity', 'Bolt load'].map((t, i) => (
                <div key={t} className={`flex h-[19px] items-center pl-[3px] ${i === 0 ? 'bg-[#3399ff] text-white' : 'text-[#101018]'}`}>
                  {t}
                </div>
              ))}
            </div>
            <div className="flex w-[17px] flex-col bg-[#f4f4f4]">
              <ScrollArrow up />
              <Thumb className="h-[92px]" />
              <div className="flex-1" />
              <ScrollArrow />
            </div>
          </div>
        </fieldset>
      </div>
      <div className="mt-[9px] flex pl-[35px]">
        <div className="flex h-[21px] w-[76px] items-center justify-center rounded-[2px] border border-[#707070] bg-[linear-gradient(#f4f4f4,#ececec_48%,#d6d6d6_52%,#c8c8c8)] text-[#101018]">Continue...</div>
        <div className="ml-[78px] flex h-[21px] w-[76px] items-center justify-center rounded-[2px] border border-[#707070] bg-[linear-gradient(#f4f4f4,#ececec_48%,#d6d6d6_52%,#c8c8c8)] text-[#101018]">Cancel</div>
      </div>
    </div>
  </div>
);

const msgs = [
  'The instance BlocoExtremidade-1 was rotated by 90. degrees about the axis defined by the point 1.6, 0., 0. and the vector 0., 1.6, 0.',
  'The instance BlocoExtremidade-1 was translated by 150.E-03, 7.5, 0. with respect to the assembly coordinate system',
  'The instance Coluna2-1 was translated by 4.7, 0., 0. with respect to the assembly coordinate system',
  'The instance BlocoMeio-1 was rotated by 90. degrees about the axis defined by the point 0., 1.6, 1.2 and the vector 0., -1.6, 0.',
  'The instance BlocoMeio-1 was translated by 1.75, 7.5, -2.78 with respect to the assembly coordinate system',
  'The instances were translated by allowable translation with respect to the assembly coordinate system',
];

const toolboxRows: [ReactNode, ReactNode][] = [
  [<LBlue load />, <Manager />],
  [<LBlue hatch />, <Manager />],
  [<LBlue rainbow />, <Manager />],
  [<LBlue hatch load />, <Manager />],
];

export default function App() {
  return (
    <div className="relative flex h-[708px] w-[1366px] flex-col overflow-hidden border-b border-[#333] bg-[#f0f0f0] font-['Open_Sans',sans-serif] text-[11.5px]">
      <Defs />
      {/* menu bar */}
      <div className="flex h-[25px] shrink-0 items-center border-t border-[#2b3a52] bg-[#f0f0f0] pt-[2px] text-[#101018]">
        <svg width="14" height="14" viewBox="0 0 14 14" className="mb-[2px] ml-[5px] shrink-0">
          <rect x="0.5" y="0.5" width="13" height="13" fill="#f4f6fa" stroke="#2a4fa0" />
          <ellipse cx="7" cy="7" rx="5" ry="4" fill="#1a2f8f" />
          <path d="M2 7h10" stroke="#fff" />
        </svg>
        <Menu u="F" post="ile" className="ml-[11px]" />
        <Menu u="M" post="odel" className="ml-[16px]" />
        <Menu pre="Vie" u="w" post="port" className="ml-[17px]" />
        <Menu u="V" post="iew" className="ml-[15px]" />
        <Menu u="L" post="oad" className="ml-[15px]" />
        <Menu u="B" post="C" className="ml-[16px]" />
        <Menu pre="Predefined Fiel" u="d" className="ml-[16px]" />
        <Menu pre="L" u="o" post="ad Case" className="ml-[14px]" />
        <Menu pre="Feat" u="u" post="re" className="ml-[15px]" />
        <Menu u="T" post="ools" className="ml-[14px]" />
        <Menu pre="Plu" u="g" post="-ins" className="ml-[16px]" />
        <Menu u="H" post="elp" className="ml-[18px]" />
        <div className="ml-[14px]">
          <Help />
        </div>
        <div className="mb-[4px] ml-auto mr-[5px] flex gap-[5px]">
          {[0, 1, 2].map((i) => (
            <div key={i} className="flex h-[13px] w-[15px] items-center justify-center border border-[#8ea0b8] bg-[linear-gradient(#eef3f9,#cfdbea)]">
              {i === 0 && <span className="mt-[5px] block h-[2px] w-[7px] bg-[#3a4656]" />}
              {i === 1 && (
                <span className="relative block h-[7px] w-[8px] border border-[#3a4656]">
                  <span className="absolute left-[1px] top-[-3px] block h-[5px] w-[7px] border border-[#3a4656]" />
                </span>
              )}
              {i === 2 && (
                <svg width="9" height="9" viewBox="0 0 9 9">
                  <path d="M1 1l7 7M8 1l-7 7" stroke="#3a4656" strokeWidth="2" />
                </svg>
              )}
            </div>
          ))}
        </div>
      </div>

      {/* main toolbar */}
      <div className="flex h-[28px] shrink-0 items-stretch border-y border-[#c4c4c4] bg-[linear-gradient(#fafafa,#ececec)] pt-[1px]">
        <Grip />
        <Cell><NewDoc /></Cell>
        <Cell><OpenDoc /></Cell>
        <Cell><Save /></Cell>
        <Cell><Printer /></Cell>
        <Cell><DbArrow /></Cell>
        <Cell><DbArrow up /></Cell>
        <Sep />
        <Grip />
        <Cell><CubeGrid /></Cell>
        <Cell><CubeRed /></Cell>
        <Cell><CubeGreen /></Cell>
        <Sep />
        <Grip />
        <Cell><Venn a /></Cell>
        <Cell><Venn /></Cell>
        <Cell><Solid /></Cell>
        <Cell><PickFace /></Cell>
        <Cell><Undo /></Cell>
        <Cell><Undo flip /></Cell>
        <Cell><Pieces /></Cell>
        <Cell><Manager /></Cell>
        <Grip />
        <Cell><Palette /></Cell>
        <div className="flex w-[134px] shrink-0 items-center">
          <div className="flex h-[24px] w-full items-center border border-[#a6a6a6] bg-white pl-[3px] text-[#101018]">
            <span className="flex-1 whitespace-nowrap">Assembly defaults</span>
            <ArrowBtn className="h-[22px] w-[11px]" />
          </div>
        </div>
        <Cell><CubeBrown /></Cell>
        <Cell w="w-[12px]">
          <span className="block h-0 w-0 border-x-[4px] border-t-[4px] border-x-transparent border-t-[#222]" />
        </Cell>
        <Sep />
        <div className="w-[8px] shrink-0" />
        <Cell><CubeWire /></Cell>
        <Cell><CubeHidden /></Cell>
        <Cell><CubeShade /></Cell>
        <Sep />
        <Grip w="w-[7px]" />
        <Cell><Move /></Cell>
        <Cell><Rotate /></Cell>
        <Cell><Magnify /></Cell>
        <Cell><BoxZoom /></Cell>
        <Cell><Fit /></Cell>
        <Cell><UpDown /></Cell>
        <Sep />
        <Grip />
        <Cell><Info /></Cell>
        <Sep />
        <Grip />
        <Cell><Cursor /></Cell>
        <div className="flex w-[106px] shrink-0 items-center">
          <div className="flex h-[24px] w-full items-center border-2 border-[#a6a6a6] bg-white">
            <span className="flex h-full flex-1 items-center bg-[#b0cdeb] pl-[2px] font-['Liberation_Sans',sans-serif] text-[12px] text-[#101018]">All</span>
            <div className="flex h-full w-[12px] items-center justify-center border-l border-[#b8b8b8] bg-[#f2f2f2]">
              <span className="block h-0 w-0 border-x-[4px] border-t-[4px] border-x-transparent border-t-[#9c9c9c]" />
            </div>
          </div>
        </div>
        <Cell w="w-[20px]"><GrayOverlap /></Cell>
        <div className="flex w-[6px] shrink-0 items-center justify-center">
          <span className="block h-[16px] w-[1px] bg-[#c0c0c0]" />
        </div>
        <Cell><GrayCube /></Cell>
        <Cell><GrayRect /></Cell>
        <Cell w="w-[27px]"><GrayPick /></Cell>
        <Cell w="w-[26px]"><GrayLasso /></Cell>
        <Sep />
        <Grip />
        <Cell><LSplit /></Cell>
        <Cell><Manager /></Cell>
        <Sep />
        <Grip w="w-[7px]" />
        <Cell><Rails /></Cell>
        <Cell><Rails slant /></Cell>
        <Sep />
      </div>

      {/* workspace */}
      <div className="flex min-h-0 flex-1">
        {/* model tree panel */}
        <div className="flex w-[318px] shrink-0 flex-col bg-[#f0f0f0] pl-[2px] pr-[4px]">
          <div className="flex h-[30px] shrink-0 items-end">
            <div className="z-10 mb-[-1px] flex h-[24px] w-[52px] items-center justify-center border border-b-0 border-[#a0a0a0] bg-white text-[12px] text-[#101018]">Model</div>
            <div className="flex h-[19px] w-[52px] items-center justify-center border border-b-0 border-l-0 border-[#a0a0a0] bg-[linear-gradient(#f2f2f2,#d8d8d8)] text-[#101018]">Results</div>
          </div>
          <div className="flex min-h-0 flex-1 flex-col border border-[#a0a0a0] bg-[#f9f9f9]">
            <div className="flex h-[33px] shrink-0 items-center pl-[2px]">
              <div className="flex h-[22px] w-[213px] items-center border-2 border-[#a6a6a6] bg-white">
                <svg width="20" height="16" viewBox="0 0 20 16" className="ml-[1px] shrink-0">
                  <ellipse cx="10" cy="12" rx="8" ry="3" fill="#c8a22e" stroke="#222" />
                  <rect x="2" y="4" width="16" height="8" fill="#d8b850" />
                  <path d="M2 4v8M18 4v8M2 8c2 3 14 3 16 0" fill="none" stroke="#222" />
                  <ellipse cx="10" cy="4" rx="8" ry="3" fill="#f0d880" stroke="#222" />
                </svg>
                <span className="flex-1 whitespace-nowrap text-[#101018]">Model Database</span>
                <ArrowBtn className="h-[18px] w-[11px]" />
              </div>
              <div className="ml-[5px] flex h-[22px] w-[13px] flex-col items-center justify-center gap-[3px]">
                <span className="block h-0 w-0 border-x-[5px] border-b-[6px] border-x-transparent border-b-[#b4b4b4]" />
                <span className="block h-0 w-0 border-x-[5px] border-t-[6px] border-x-transparent border-t-[#b4b4b4]" />
              </div>
              <div className="ml-[7px] w-[18px]">
                <svg width="18" height="16" viewBox="0 0 18 16">
                  <path d="M1.5 3.5h5l1 2h9v9h-15z" fill="#f4f4f4" stroke="#999" />
                  <path d="M9 13V7M7 9l2-2 2 2" fill="none" stroke="#999" />
                </svg>
              </div>
              <div className="ml-[9px] w-[18px]">
                <svg width="18" height="18" viewBox="0 0 18 18">
                  <path d="M3.5 2.5h4v4h-4zM9.5 8.5h4v4h-4zM13.5 12.5h4v4h-4zM7 6l3 3M5 7v6h5" fill="#f4f4f4" stroke="#999" />
                </svg>
              </div>
              <div className="ml-[9px] w-[18px]">
                <svg width="18" height="20" viewBox="0 0 18 20">
                  <path d="M9 3a5 5 0 0 1 3 9v2H6v-2a5 5 0 0 1 3-9z" fill="#eef078" stroke="#444" />
                  <path d="M6 15.5h6M7 17.5h4" stroke="#222" strokeWidth="1.4" />
                  <path d="M2 4l1.5 1.5M16 4l-1.5 1.5M0 9h2M16 9h2M9 0v1.5" stroke="#888" />
                </svg>
              </div>
            </div>
            <div className="mx-0 flex min-h-0 flex-1 border-t border-[#c8c8c8] bg-white">
              <div className="flex min-w-0 flex-1 flex-col overflow-hidden">
                {tree.map((it) => (
                  <TreeRow key={it.label} item={it} />
                ))}
              </div>
              <div className="flex w-[16px] shrink-0 flex-col bg-[#f4f4f4]">
                <ScrollArrow up />
                <div className="h-[174px]" />
                <Thumb className="h-[212px] w-[15px]" />
                <div className="flex-1" />
                <ScrollArrow />
              </div>
            </div>
          </div>
        </div>

        {/* right side */}
        <div className="flex min-w-0 flex-1 flex-col">
          <div className="flex h-[33px] shrink-0 items-center bg-[linear-gradient(#fff,#f0f0f0)] pl-[10px] pt-[1px] text-[#101018]">
            <span>Module:</span>
            <div className="ml-[5px]"><ModuleCombo value="Load" w="w-[106px]" /></div>
            <span className="ml-[15px]">Model:</span>
            <div className="ml-[4px]"><ModuleCombo value="PonteRolante" w="w-[108px]" off /></div>
            <span className="ml-[14px]">Step:</span>
            <div className="ml-[4px]"><ModuleCombo value="Posição 1" w="w-[87px]" /></div>
          </div>
          <div className="flex min-h-0 flex-1">
            {/* module toolbox */}
            <div className="flex w-[64px] shrink-0 flex-col bg-[linear-gradient(90deg,#f4f4f4,#f0f0f0_70%,#d9d9d9)] pl-[5px] pr-[3px] pt-[2px]">
              <div className="flex flex-col">
                {toolboxRows.map((r, i) => (
                  <div key={i} className="flex h-[33px] items-center">
                    <div className={`flex h-[26px] w-[28px] items-center justify-center ${i === 0 ? 'rounded-[3px] border border-[#777] bg-[#f8f8f8]' : ''}`}>{r[0]}</div>
                    <div className="flex w-[28px] items-center justify-center">{r[1]}</div>
                  </div>
                ))}
              </div>
              <div className="mt-[-2px] h-[1px] bg-[#b8b8b8]" />
              <div className="mt-[5px] flex h-[28px] items-center">
                <Cell w="w-[28px]"><TBase cut /></Cell>
                <Cell w="w-[28px]"><TSplit /></Cell>
              </div>
              <div className="flex h-[28px] items-center">
                <Cell w="w-[28px]"><Erase /></Cell>
              </div>
              <div className="mt-[2px] h-[1px] bg-[#b8b8b8]" />
              <div className="mt-[4px] flex h-[26px] items-center">
                <Cell w="w-[28px]"><Sketch n={0} /></Cell>
                <Cell w="w-[28px]"><LGold circle /></Cell>
              </div>
              <div className="flex h-[24px] items-center">
                <Cell w="w-[28px]"><PartHole /></Cell>
                <Cell w="w-[28px]"><LGold cut /></Cell>
              </div>
              <div className="mt-[5px] h-[1px] bg-[#b8b8b8]" />
              <div className="mt-[3px] flex h-[30px] items-center">
                <Cell w="w-[28px]"><Sketch n={1} /></Cell>
                <Cell w="w-[28px]"><Sketch n={2} /></Cell>
              </div>
              <div className="flex h-[28px] items-center">
                <Cell w="w-[28px]"><Sketch n={3} /></Cell>
                <Cell w="w-[28px]"><Sketch n={4} /></Cell>
              </div>
            </div>

            {/* viewport + prompt */}
            <div className="flex min-w-0 flex-1 flex-col">
              <div className="relative h-[496px] shrink-0 border-t border-[#6a6a6a] bg-[linear-gradient(#1d2b47,#2f4059_52%,#6c7a93_80%,#a6b0c3)]">
                <Wire />
                <Dialog />
              </div>
            </div>
          </div>
          <div className="flex h-[32px] shrink-0 items-center bg-[#f0f0f0] pl-[7px] pt-[1px] text-[#101018]">
            <div className="flex h-[21px] w-[18px] items-center justify-center rounded-[2px] border border-[#a8a8a8] bg-[#f2f2f2]">
              <svg width="14" height="12" viewBox="0 0 14 12">
                <path d="M0 6l6-5.5V4h8v4H6v3.5z" fill="#9c9c9c" />
              </svg>
            </div>
            <div className="ml-[4px] flex h-[22px] w-[19px] items-center justify-center rounded-[2px] border border-[#777] bg-[#e4e4e4]">
              <svg width="14" height="15" viewBox="0 0 14 15">
                <path d="M2 1l10 13M12 1L2 14" stroke="#e01818" strokeWidth="2" />
              </svg>
            </div>
            <span className="ml-[8px] whitespace-nowrap">Fill out the Create Load dialog</span>
            <div className="ml-auto mr-[3px] flex items-center text-[#55585c]">
              <span className="skew-x-[-14deg] font-['Liberation_Sans',sans-serif] text-[15px] font-bold leading-none tracking-[-1px]">3DS</span>
              <span className="ml-[2px] font-['Liberation_Sans',sans-serif] text-[15px] font-medium leading-none tracking-[2.2px]">SIMULIA</span>
            </div>
          </div>
        </div>
      </div>

      {/* message area */}
      <div className="flex h-[93px] shrink-0 border-t border-[#a8a8a8] bg-[#f0f0f0] pt-[5px]">
        <div className="flex w-[39px] shrink-0 flex-col pl-[2px]">
          <div className="flex h-[38px] w-[37px] items-center justify-center border border-r-0 border-[#a8a8a8] bg-white">
            <svg width="20" height="22" viewBox="0 0 20 22">
              <rect x="2.5" y="1.5" width="16" height="18" fill="#e4e0c0" stroke="#444" />
              <path d="M1 21l3-1 6-6-2-2-6 6z" fill="#d49a28" stroke="#6a4a10" />
            </svg>
          </div>
          <div className="flex h-[36px] w-[35px] items-center justify-center border border-[#a8a8a8] bg-[#d8d8d8]">
            <div className="flex h-[25px] w-[25px] items-center justify-center border border-[#555] bg-[linear-gradient(#f6e08c,#e8c040)]">
              <svg width="20" height="10" viewBox="0 0 20 10">
                <path d="M2 1l4 4-4 4M8 1l4 4-4 4M14 1l4 4-4 4" fill="none" stroke="#111" strokeWidth="1.7" />
              </svg>
            </div>
          </div>
        </div>
        <div className="mb-[2px] flex w-[1309px] border-2 border-[#a8a8a8] bg-white">
          <div className="flex-1 overflow-hidden pl-[4px] pt-[2px] font-['Liberation_Mono',monospace] text-[13.33px] leading-[13px] text-[#111]">
            {msgs.map((m) => (
              <div key={m} className="whitespace-pre">
                {m}
              </div>
            ))}
          </div>
          <div className="flex w-[15px] shrink-0 flex-col bg-[#f4f4f4]">
            <ScrollArrow up />
            <div className="flex-1" />
            <Thumb className="h-[31px] w-[14px]" />
            <ScrollArrow />
          </div>
        </div>
      </div>
    </div>
  );
}
